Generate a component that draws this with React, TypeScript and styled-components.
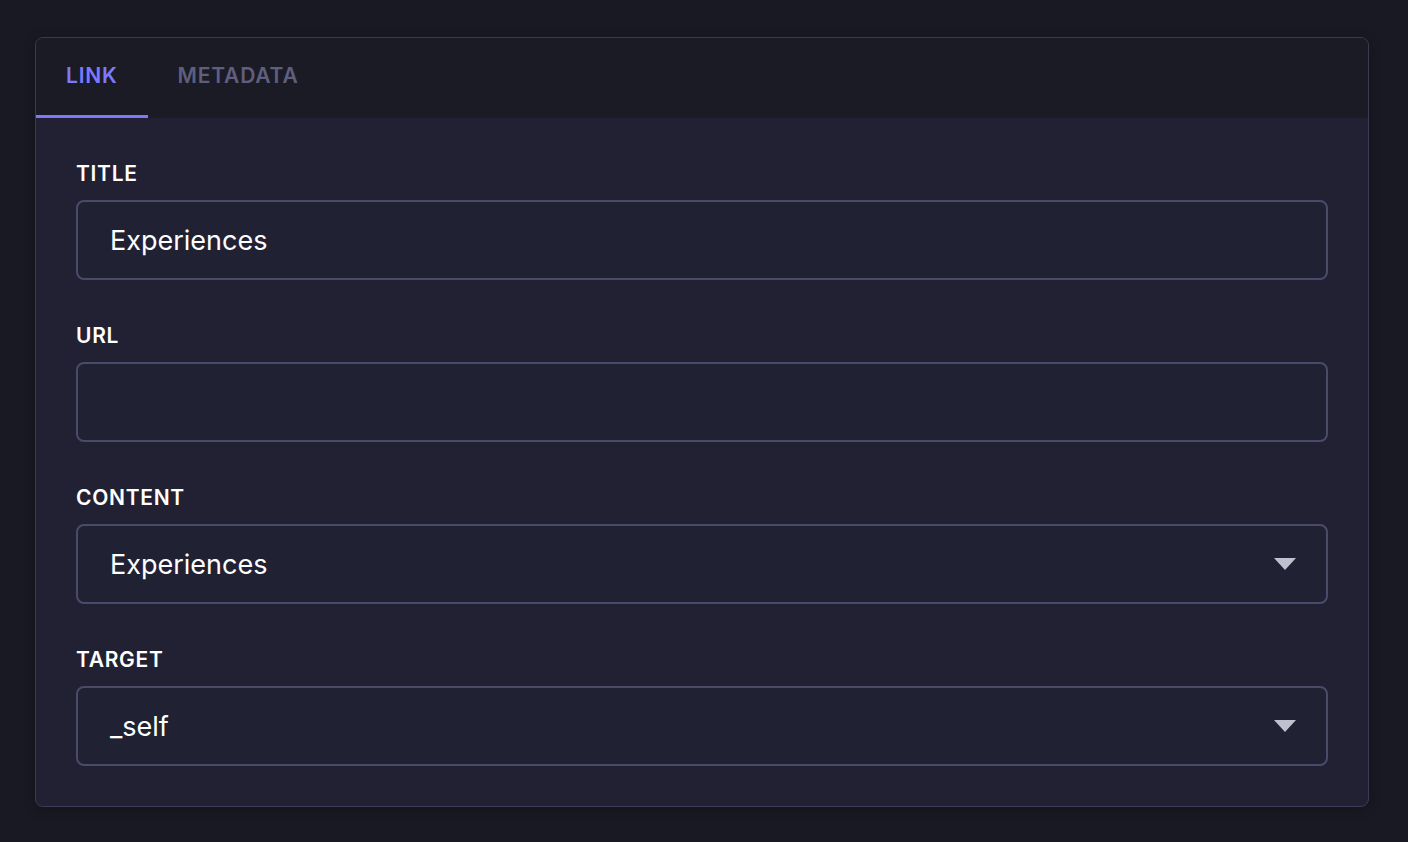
import { useState } from 'react'
import styled, { createGlobalStyle } from 'styled-components'

const GlobalStyle = createGlobalStyle`
  html, body {
    margin: 0;
    padding: 0;
    background: #191923;
  }

  body {
    font-family: Inter, "Noto Sans", "Liberation Sans", sans-serif;
    -webkit-font-smoothing: antialiased;
  }
`

const Page = styled.div`
  min-height: 842px;
  box-sizing: border-box;
  padding: 37px 39px 0 35px;
`

const Card = styled.section`
  border: 1px solid #3b3a55;
  border-radius: 8px;
  background: #222133;
  overflow: hidden;
  box-shadow: 0 2px 12px rgba(0, 0, 0, 0.25);
`

const TabList = styled.div`
  display: flex;
  background: #1b1b26;
  height: 80px;
`

const Tab = styled.button<{ $active?: boolean }>`
  border: 0;
  background: transparent;
  padding: 0 30px 3px;
  font-family: inherit;
  font-size: 21px;
  font-weight: 600;
  letter-spacing: 0.8px;
  text-transform: uppercase;
  color: ${(p) => (p.$active ? '#7b79ff' : '#5f5e7f')};
  cursor: pointer;
  border-bottom: 3px solid ${(p) => (p.$active ? '#7b79ff' : 'transparent')};
`

const Body = styled.div`
  display: flex;
  flex-direction: column;
  gap: 40px;
  padding: 40px;
`

const Field = styled.div`
  display: flex;
  flex-direction: column;
  gap: 10px;
`

const Label = styled.label`
  font-size: 21px;
  line-height: 32px;
  font-weight: 600;
  letter-spacing: 0.7px;
  color: #ffffff;
  text-transform: uppercase;
`

const InputBox = styled.div`
  display: flex;
  align-items: center;
  height: 80px;
  box-sizing: border-box;
  border: 2px solid #4a4a6a;
  border-radius: 8px;
  background: #212134;
`

const TextInput = styled.input`
  flex: 1;
  height: 100%;
  border: 0;
  outline: none;
  background: transparent;
  padding: 0 32px;
  font-family: inherit;
  font-size: 27px;
  color: #ffffff;
`

const SelectValue = styled.div`
  flex: 1;
  padding: 0 32px;
  font-size: 27px;
  color: #ffffff;
`

const Caret = styled.svg`
  width: 22px;
  height: 12px;
  margin-right: 30px;
  fill: #c0c0cf;
`

const Select = ({ value }: { value: string }) => (
  <InputBox>
    <SelectValue>{value}</SelectValue>
    <Caret viewBox="0 0 22 12">
      <path d="M0 0h22L11 12z" />
    </Caret>
  </InputBox>
)

export default function App() {
  const [tab, setTab] = useState('link')
  const [title, setTitle] = useState('Experiences')
  const [url, setUrl] = useState('')

  return (
    <Page>
      <GlobalStyle />
      <Card>
        <TabList>
          <Tab $active={tab === 'link'} onClick={() => setTab('link')}>
            Link
          </Tab>
          <Tab $active={tab === 'metadata'} onClick={() => setTab('metadata')}>
            Metadata
          </Tab>
        </TabList>

        <Body>
          <Field>
            <Label>Title</Label>
            <InputBox>
              <TextInput value={title} onChange={(e) => setTitle(e.target.value)} />
            </InputBox>
          </Field>
          <Field>
            <Label>URL</Label>
            <InputBox>
              <TextInput value={url} onChange={(e) => setUrl(e.target.value)} />
            </InputBox>
          </Field>
          <Field>
            <Label>Content</Label>
            <Select value="Experiences" />
          </Field>
          <Field>
            <Label>Target</Label>
            <Select value="_self" />
          </Field>
        </Body>
      </Card>
    </Page>
  )
}
